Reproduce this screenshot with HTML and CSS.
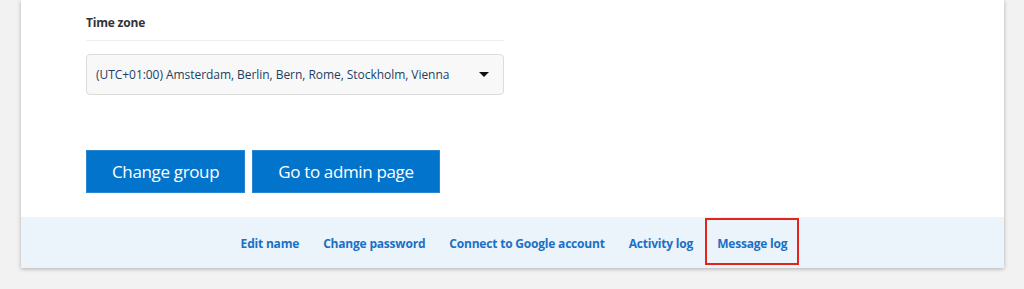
FILE: index.html
```html
<!DOCTYPE html>
<html lang="en">
<head>
<meta charset="utf-8">
<title>Account settings</title>
<link rel="stylesheet" href="styles.css">
</head>
<body>
<div class="card">
  <div class="content">
    <div class="field">
      <div class="label">Time zone</div>
      <div class="select">
        <span class="select-text">(UTC+01:00) Amsterdam, Berlin, Bern, Rome, Stockholm, Vienna</span>
        <span class="caret"></span>
      </div>
    </div>
    <div class="actions">
      <button class="btn">Change group</button>
      <button class="btn">Go to admin page</button>
    </div>
  </div>
  <nav class="footer">
    <a class="link" href="#">Edit name</a>
    <a class="link" href="#">Change password</a>
    <a class="link" href="#">Connect to Google account</a>
    <a class="link" href="#">Activity log</a>
    <a class="link link-marked" href="#">Message log</a>
  </nav>
</div>
</body>
</html>
```

FILE: styles.css
```css
html, body {
  margin: 0;
  padding: 0;
}
body {
  background: #f2f2f2;
  font-family: "Open Sans", "Noto Sans", sans-serif;
  height: 289px;
  overflow: hidden;
}
.card {
  margin: 0 20px 0 21px;
  background: #fff;
  box-shadow: 0 1px 4px rgba(0, 0, 0, 0.28);
}
.content {
  padding: 0 0 24px 65px;
}
.field {
  width: 418px;
}
.label {
  font-size: 12px;
  letter-spacing: -0.2px;
  font-weight: 700;
  color: #333;
  line-height: 18px;
  padding: 14px 0 8px;
  border-bottom: 1px solid #efefef;
}
.select {
  margin-top: 13px;
  height: 39px;
  border: 1px solid #dcdcdc;
  border-radius: 4px;
  background: #f8f8f8;
  display: flex;
  align-items: center;
  justify-content: space-between;
  padding: 0 14px 0 9px;
}
.select-text {
  font-size: 12px;
  letter-spacing: -0.05px;
  color: #1d3f62;
  white-space: nowrap;
}
.caret {
  width: 0;
  height: 0;
  border-left: 5px solid transparent;
  border-right: 5px solid transparent;
  border-top: 5px solid #111;
}
.actions {
  margin-top: 55px;
  display: flex;
  gap: 7px;
}
.btn {
  height: 43px;
  padding: 0 25px;
  border: 1px solid #2a86d3;
  background: #0274cc;
  color: #fff;
  font-family: inherit;
  font-size: 17px;
  letter-spacing: -0.35px;
  border-radius: 0;
}
.footer {
  background: #ebf3fb;
  height: 51px;
  display: flex;
  justify-content: center;
  align-items: flex-start;
  padding-left: 3px;
}
.link {
  display: block;
  margin-top: 1px;
  height: 39px;
  line-height: 39px;
  padding: 4px 10px 0;
  border: 2px solid transparent;
  font-size: 12px;
  letter-spacing: -0.2px;
  font-weight: 700;
  color: #1a70c6;
  text-decoration: none;
}
.link-marked {
  border-color: #e3241b;
}
```
